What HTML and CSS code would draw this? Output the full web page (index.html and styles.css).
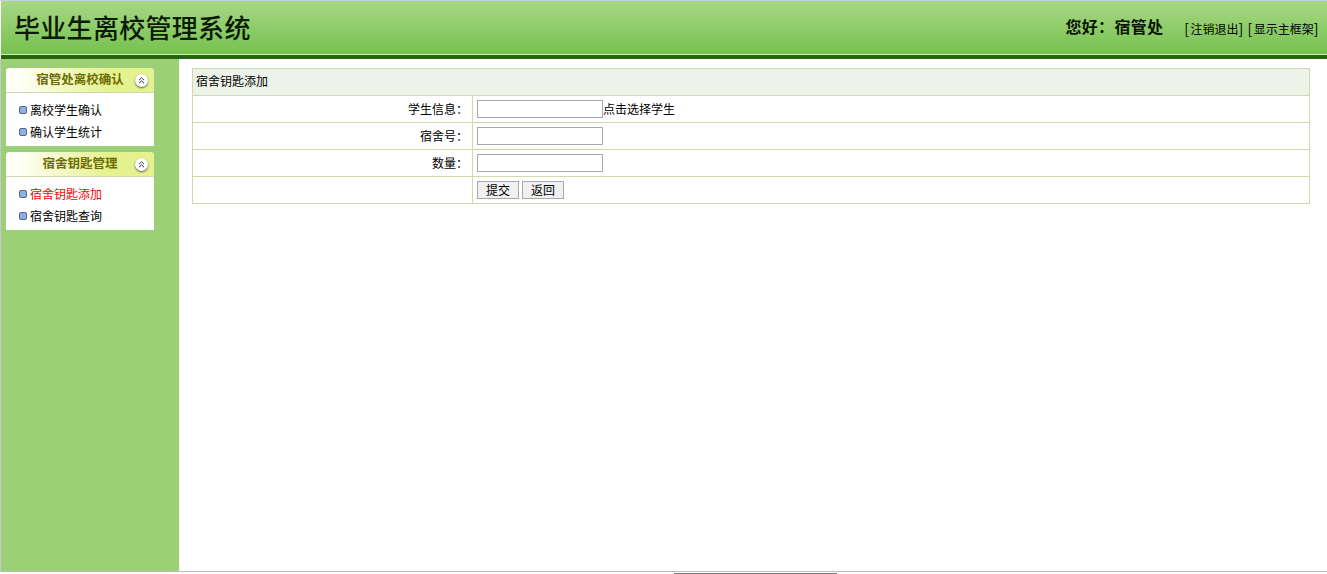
FILE: index.html
```html
<!DOCTYPE html>
<html lang="zh-CN">
<head>
<meta charset="utf-8">
<title>毕业生离校管理系统</title>
<link rel="stylesheet" href="styles.css">
</head>
<body>
<div class="frame">
  <header class="topbar">
    <h1 class="brand">毕业生离校管理系统</h1>
    <div class="userbox">
      <span class="greeting">您好：宿管处</span>
      <span class="toplinks"><a href="#"><b>[</b>注销退出<b>]</b></a> <a href="#"><b>[</b>显示主框架<b>]</b></a></span>
    </div>
  </header>
  <div class="rule"></div>
  <div class="main">
    <aside class="sidebar">
      <section class="panel">
        <div class="panel-head">
          <span class="panel-title">宿管处离校确认</span>
          <span class="toggle"><svg width="7" height="7" viewBox="0 0 7 7"><path d="M1 3.2 3.5 .8 6 3.2M1 6.2 3.5 3.8 6 6.2" fill="none" stroke="#333" stroke-width="1"/></svg></span>
        </div>
        <ul class="menu">
          <li><a href="#">离校学生确认</a></li>
          <li><a href="#">确认学生统计</a></li>
        </ul>
      </section>
      <section class="panel">
        <div class="panel-head">
          <span class="panel-title">宿舍钥匙管理</span>
          <span class="toggle"><svg width="7" height="7" viewBox="0 0 7 7"><path d="M1 3.2 3.5 .8 6 3.2M1 6.2 3.5 3.8 6 6.2" fill="none" stroke="#333" stroke-width="1"/></svg></span>
        </div>
        <ul class="menu">
          <li><a href="#" class="active">宿舍钥匙添加</a></li>
          <li><a href="#">宿舍钥匙查询</a></li>
        </ul>
      </section>
    </aside>
    <main class="content">
      <table class="form-table">
        <colgroup><col class="col-label"><col></colgroup>
        <tr><th colspan="2" class="table-title">宿舍钥匙添加</th></tr>
        <tr>
          <td class="label">学生信息：</td>
          <td class="field"><input type="text" class="input"><span class="pick">点击选择学生</span></td>
        </tr>
        <tr>
          <td class="label">宿舍号：</td>
          <td class="field"><input type="text" class="input"></td>
        </tr>
        <tr>
          <td class="label">数量：</td>
          <td class="field"><input type="text" class="input"></td>
        </tr>
        <tr>
          <td class="label"></td>
          <td class="field"><button type="button" class="btn">提交</button><button type="button" class="btn">返回</button></td>
        </tr>
      </table>
    </main>
  </div>
  <div class="scroll-thumb"></div>
</div>
</body>
</html>
```
FILE: styles.css
```css
* { box-sizing: border-box; }
html, body { margin: 0; padding: 0; height: 100%; overflow: hidden; background: #fff; }
body { font: 12px/1.2 "Noto Sans CJK SC", "Liberation Sans", sans-serif; color: #000; }
a { color: inherit; text-decoration: none; }

.frame {
  position: relative;
  height: 574px;
  display: flex;
  flex-direction: column;
  border-top: 1px solid #c4d0e2;
  padding-bottom: 2px;
}
.frame::after {
  content: "";
  position: absolute;
  left: 0;
  right: 0;
  bottom: 2px;
  height: 1px;
  background: #bdbdbd;
}

.topbar {
  height: 54px;
  margin-left: 1px;
  flex: none;
  display: flex;
  align-items: center;
  justify-content: space-between;
  padding: 0 7px 0 13px;
  background: linear-gradient(#a8d885, #75c14f);
  border-bottom: 1px solid #d6eeb8;
}
.rule { height: 4px; flex: none; margin-left: 1px; background: #25650f; }
.brand { margin: 0 0 1px; font-size: 26px; font-weight: 500; line-height: 1; letter-spacing: .3px; color: #0c1a06; }
.userbox { display: flex; align-items: center; gap: 21px; }
.greeting { font-size: 16px; font-weight: 700; letter-spacing: .3px; color: #0b1606; margin-bottom: 2px; }
.toplinks { font-size: 12px; color: #000; padding-top: 2px; }
.toplinks b { font-size: 14px; font-weight: 400; letter-spacing: 1.5px; }

.main { flex: 1; display: flex; min-height: 0; border-left: 1px solid #c8c8c8; }
.sidebar {
  width: 178px;
  flex: none;
  background: #9cd076;
  padding: 9px 25px 0 5px;
  display: flex;
  flex-direction: column;
  gap: 6px;
}
.panel { background: #fff; height: 78px; border-radius: 4px 4px 0 0; }
.panel-head {
  height: 25px;
  position: relative;
  display: flex;
  align-items: center;
  justify-content: center;
  padding-bottom: 3px;
  background: linear-gradient(90deg, #fffff8 8%, #e4f28e 70%, #e5f28f);
  border-bottom: 1px solid #d0d8b0;
  border-radius: 4px 4px 0 0;
}
.panel-title { font-size: 12.5px; font-weight: 700; color: #6c6c00; }
.toggle {
  position: absolute;
  right: 6px;
  top: 6px;
  width: 13px;
  height: 13px;
  border-radius: 50%;
  background: #fff;
  box-shadow: 0 1px 2px #555;
  display: flex;
  align-items: center;
  justify-content: center;
}
.menu { list-style: none; margin: 0; padding: 6px 0 0 13px; }
.menu li {
  height: 22px;
  display: flex;
  align-items: center;
  gap: 5px;
}
.menu li::before {
  content: "";
  width: 6px;
  height: 6px;
  margin-right: -2px;
  border: 1px solid #59667e;
  border-radius: 2px;
  background: #8fb0e6;
  flex: none;
}
.menu .active { color: #f00; }

.content { flex: 1; padding: 9px 17px 0 13px; }
.form-table {
  width: 100%;
  border-collapse: collapse;
  table-layout: fixed;
}
.col-label { width: 280px; }
.form-table th, .form-table td { border: 1px solid #cfd9ad; height: 27px; padding: 0; }
.form-table .table-title {
  background: #edf3e9;
  font-weight: 400;
  text-align: left;
  padding: 0 0 2px 3px;
}
.form-table .label { text-align: right; padding-right: 4px; }
.form-table .field { padding-left: 4px; }
.input {
  width: 126px;
  height: 18px;
  padding: 0 2px;
  border: 1px solid #a9a9a9;
  background: #fff;
  vertical-align: middle;
  font: inherit;
}
.pick { vertical-align: middle; }
.btn {
  width: 42px;
  height: 18px;
  padding: 0;
  margin-right: 3px;
  border: 1px solid #a9a9a9;
  background: #f0f0f0;
  font: inherit;
  color: #000;
  vertical-align: middle;
}
.btn:last-child { margin-right: 0; }

.scroll-thumb {
  position: absolute;
  left: 674px;
  bottom: 0;
  width: 163px;
  height: 1px;
  background: #777;
}
```
